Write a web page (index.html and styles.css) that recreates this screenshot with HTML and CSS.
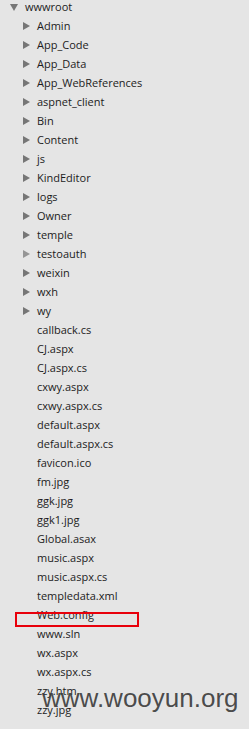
FILE: index.html
```html
<!DOCTYPE html>
<html>
<head>
<meta charset="utf-8">
<link rel="stylesheet" href="styles.css">
</head>
<body>
<div class="tree">
  <div class="row root"><span class="arrow-down"></span><span class="name">wwwroot</span></div>
  <div class="row dir"><span class="arrow-right"></span><span class="name">Admin</span></div>
  <div class="row dir"><span class="arrow-right"></span><span class="name">App_Code</span></div>
  <div class="row dir"><span class="arrow-right"></span><span class="name">App_Data</span></div>
  <div class="row dir"><span class="arrow-right"></span><span class="name">App_WebReferences</span></div>
  <div class="row dir"><span class="arrow-right"></span><span class="name">aspnet_client</span></div>
  <div class="row dir"><span class="arrow-right"></span><span class="name">Bin</span></div>
  <div class="row dir"><span class="arrow-right"></span><span class="name">Content</span></div>
  <div class="row dir"><span class="arrow-right"></span><span class="name">js</span></div>
  <div class="row dir"><span class="arrow-right"></span><span class="name">KindEditor</span></div>
  <div class="row dir"><span class="arrow-right"></span><span class="name">logs</span></div>
  <div class="row dir"><span class="arrow-right"></span><span class="name">Owner</span></div>
  <div class="row dir"><span class="arrow-right"></span><span class="name">temple</span></div>
  <div class="row dir"><span class="arrow-right light"></span><span class="name">testoauth</span></div>
  <div class="row dir"><span class="arrow-right"></span><span class="name">weixin</span></div>
  <div class="row dir"><span class="arrow-right"></span><span class="name">wxh</span></div>
  <div class="row dir"><span class="arrow-right"></span><span class="name">wy</span></div>
  <div class="row file"><span class="name">callback.cs</span></div>
  <div class="row file"><span class="name">CJ.aspx</span></div>
  <div class="row file"><span class="name">CJ.aspx.cs</span></div>
  <div class="row file"><span class="name">cxwy.aspx</span></div>
  <div class="row file"><span class="name">cxwy.aspx.cs</span></div>
  <div class="row file"><span class="name">default.aspx</span></div>
  <div class="row file"><span class="name">default.aspx.cs</span></div>
  <div class="row file"><span class="name">favicon.ico</span></div>
  <div class="row file"><span class="name">fm.jpg</span></div>
  <div class="row file"><span class="name">ggk.jpg</span></div>
  <div class="row file"><span class="name">ggk1.jpg</span></div>
  <div class="row file"><span class="name">Global.asax</span></div>
  <div class="row file"><span class="name">music.aspx</span></div>
  <div class="row file"><span class="name">music.aspx.cs</span></div>
  <div class="row file"><span class="name">templedata.xml</span></div>
  <div class="row file marked"><span class="name">Web.config</span><span class="highlight"></span></div>
  <div class="row file"><span class="name">www.sln</span></div>
  <div class="row file"><span class="name">wx.aspx</span></div>
  <div class="row file"><span class="name">wx.aspx.cs</span></div>
  <div class="row file"><span class="name">zzy.htm</span></div>
  <div class="row file"><span class="name">zzy.jpg</span></div>
  <div class="watermark">www.wooyun.org</div>
</div>
</body>
</html>
```

FILE: styles.css
```css
html, body {
  margin: 0;
  padding: 0;
  background: #e5e5e5;
}
body {
  width: 249px;
  height: 729px;
  overflow: hidden;
}
.tree {
  position: relative;
  height: 729px;
  font-family: "Open Sans", "Noto Sans", sans-serif;
  font-size: 11px;
  color: #1c1c1c;
}
.row {
  position: relative;
  display: flex;
  align-items: flex-start;
  height: 19px;
  line-height: 13px;
  white-space: nowrap;
}
.root {
  padding-left: 10px;
}
.dir {
  padding-left: 23px;
}
.file {
  padding-left: 37px;
}
.arrow-down {
  width: 0;
  height: 0;
  margin-top: 4px;
  border-left: 4px solid transparent;
  border-right: 4px solid transparent;
  border-top: 7px solid #767676;
  margin-right: 7px;
}
.arrow-right {
  width: 0;
  height: 0;
  margin-top: 3px;
  border-top: 4.5px solid transparent;
  border-bottom: 4.5px solid transparent;
  border-left: 7px solid #767676;
  margin-right: 7px;
}
.arrow-right.light {
  border-left-color: #959595;
}
.highlight {
  position: absolute;
  left: 15px;
  top: 4px;
  width: 120px;
  height: 11px;
  border: 2px solid #e8000b;
}
.watermark {
  position: absolute;
  left: 42px;
  top: 683px;
  font-family: "Liberation Sans", Arial, sans-serif;
  font-size: 26px;
  line-height: 30px;
  color: rgba(60, 60, 60, 0.92);
  white-space: nowrap;
}
```
